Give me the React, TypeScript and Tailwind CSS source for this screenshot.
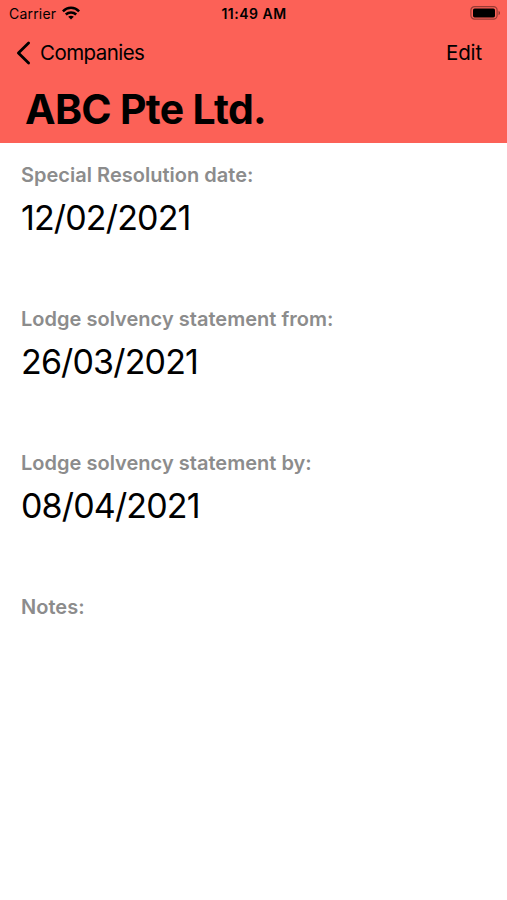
import React from "react";

const fields = [
    { label: "Special Resolution date:", value: "12/02/2021" },
    { label: "Lodge solvency statement from:", value: "26/03/2021" },
    { label: "Lodge solvency statement by:", value: "08/04/2021" },
    { label: "Notes:", value: "" },
];

const WifiIcon: React.FC = () => {
    return (
        <svg width="18" height="14" viewBox="0 0 18 14" fill="none" stroke="black" strokeWidth="2.5">
            <path d="M.9 5.3C5.5 .6 12.5 .6 17.1 5.3" />
            <path d="M3.8 8.5c2.9-2.8 7.5-2.8 10.4 0" />
            <path d="M6.2 10.7c1.6-1.4 4-1.4 5.6 0L9 13.6z" fill="black" stroke="none" />
        </svg>
    );
};

const BatteryIcon: React.FC = () => {
    return (
        <svg width="31" height="14" viewBox="0 0 31 14" fill="none">
            <rect x=".9" y=".7" width="26.2" height="12.4" rx="3.6" stroke="black" strokeOpacity=".4" strokeWidth="1.2" />
            <rect x="3" y="2.6" width="22" height="8.8" rx="1.6" fill="black" />
            <path d="M28.6 4.8c1.8.7 1.8 3.7 0 4.4z" fill="black" fillOpacity=".5" />
        </svg>
    );
};

const Header: React.FC = () => {
    return (
        <header className="h-[143px] bg-[#fc6157]">
            <div className="grid h-[26px] grid-cols-3 items-center pl-[9px] pr-[6px] text-[14px]">
                <div className="flex items-center gap-[6px]">
                    <span className="tracking-[0.2px]">Carrier</span>
                    <WifiIcon />
                </div>
                <span className="-ml-[2px] whitespace-nowrap text-center font-semibold tracking-[0.5px]">11:49 AM</span>
                <div className="flex justify-end">
                    <BatteryIcon />
                </div>
            </div>
            <div className="flex h-[53px] items-center justify-between pl-4 pr-[25px] text-[20.5px]">
                <button className="flex items-center gap-[9px]">
                    <svg width="15" height="24" viewBox="0 0 15 24" fill="none" stroke="black" strokeWidth="2.8" strokeLinecap="round" strokeLinejoin="round">
                        <path d="M12.6 2 2.4 12l10.2 10" />
                    </svg>
                    <span className="pt-px tracking-[-0.55px]">Companies</span>
                </button>
                <button className="pt-px tracking-[-0.15px]">Edit</button>
            </div>
            <h1 className="-ml-px pl-[26px] pt-[5px] text-[41px] font-bold leading-[50px] tracking-[-0.7px]">ABC Pte Ltd.</h1>
        </header>
    );
};

const App: React.FC = () => {
    return (
        <div className="min-h-screen bg-white font-[Inter,sans-serif] text-black">
            <Header />
            <main className="pl-[21px] pt-[18px]">
                {fields.map((field) => (
                    <section key={field.label} className="h-36">
                        <h2 className="text-[20px] font-semibold leading-7 tracking-[0.02px] text-[#8c8c8c]">{field.label}</h2>
                        <p className="pt-[8px] text-[34px] leading-[42px] tracking-[-0.85px]">{field.value}</p>
                    </section>
                ))}
            </main>
        </div>
    );
};

export default App;
